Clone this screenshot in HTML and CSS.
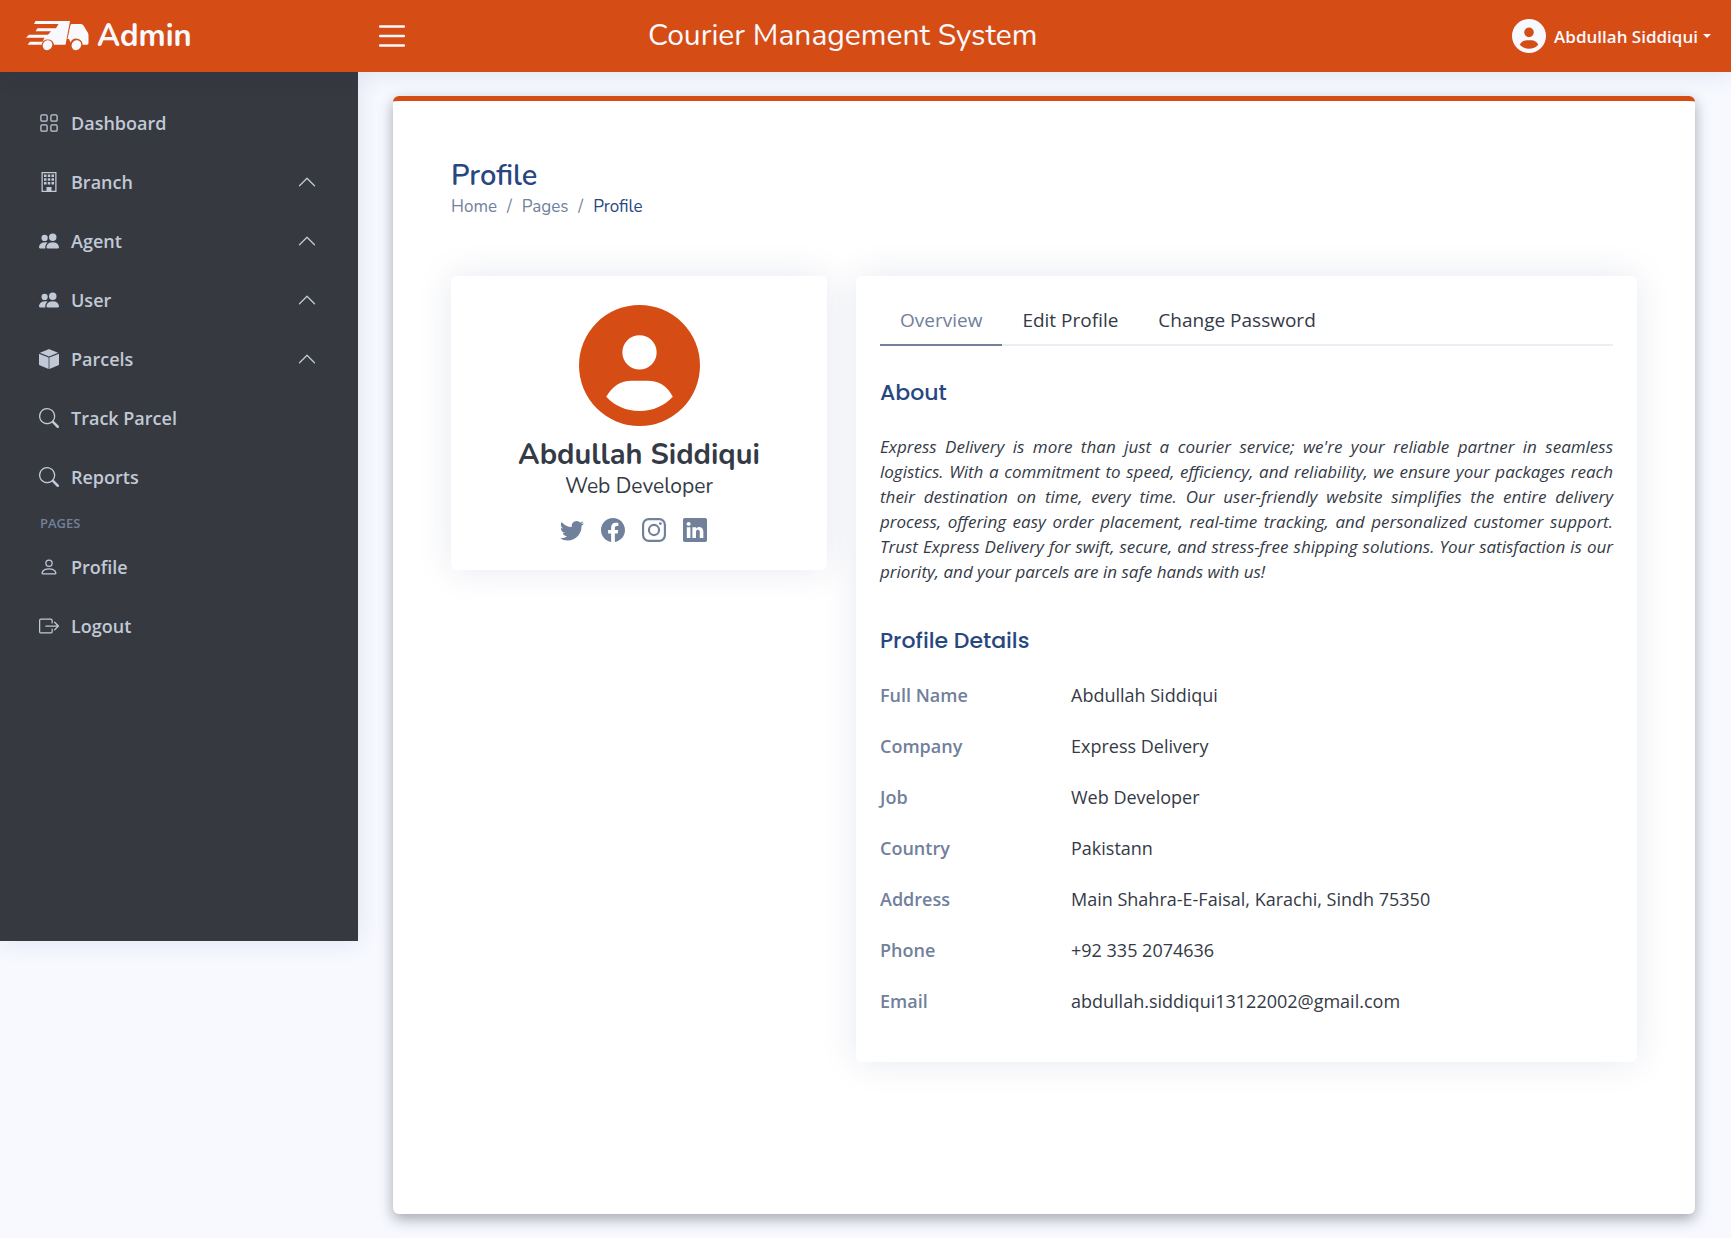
FILE: index.html
```html
<!DOCTYPE html>
<html lang="en">
<head>
<meta charset="utf-8">
<meta name="viewport" content="width=device-width, initial-scale=1">
<title>Profile - Courier Management System</title>
<link rel="stylesheet" href="styles.css">
</head>
<body>
<header class="header">
  <a class="logo" href="#">
    <svg class="logo-icon" viewBox="0 0 64 30" aria-hidden="true" fill="currentColor">
      <path d="M9.500 0H44L39.500 23.700H28A6.300 6.300 0 0 0 15.600 23.700H1.500L4 20.700H16.500L18.500 16.700H0L3 13.700H22L25 10.300H9.500L11.500 7.300H30L32.500 3H8Z"/>
      <path d="M46 3H55Q56.500 3 57.500 4.500L62 12Q62.500 13 62.500 14.500V22Q62.500 23.700 61 23.700H56.600A6.300 6.300 0 0 0 44.500 21.500L43 18H41.500L44.500 4Q44.800 3 46 3Z"/>
      <ellipse cx="21.500" cy="24.200" rx="4.600" ry="5.200" transform="rotate(35 21.500 24.200)"/>
      <ellipse cx="50.400" cy="24.200" rx="4.600" ry="5.200" transform="rotate(35 50.400 24.200)"/>
    </svg>
    <span>Admin</span>
  </a>
  <button class="menu-toggle" type="button" aria-label="Toggle sidebar">
    <svg viewBox="0 0 16 16" fill="currentColor" aria-hidden="true"><path fill-rule="evenodd" d="M2.500 12a.5.5 0 0 1 .5-.5h10a.5.5 0 0 1 0 1H3a.5.5 0 0 1-.5-.5m0-4a.5.5 0 0 1 .5-.5h10a.5.5 0 0 1 0 1H3a.5.5 0 0 1-.5-.5m0-4a.5.5 0 0 1 .5-.5h10a.5.5 0 0 1 0 1H3a.5.5 0 0 1-.5-.5"/></svg>
  </button>
  <div class="system-name">Courier Management System</div>
  <button class="account" type="button">
    <svg class="account-avatar" viewBox="0 0 120 120" aria-hidden="true"><use href="#avatar"/></svg>
    <span>Abdullah Siddiqui</span>
    <span class="caret"></span>
  </button>
</header>

<svg class="sprite" aria-hidden="true">
  <symbol id="avatar" viewBox="0 0 120 120"><path fill="currentColor" fill-rule="evenodd" d="M60 0a60 60 0 1 0 0 120a60 60 0 1 0 0-120M60 30a17 17 0 1 1 0 34a17 17 0 1 1 0-34M27 91Q36 75 52 75H68Q85 75 93 91Q80 105 60 105Q40 105 27 91"/></symbol>
  <symbol id="people" viewBox="0 0 16 16"><path d="M7 14s-1 0-1-1 1-4 5-4 5 3 5 4-1 1-1 1zm4-6a3 3 0 1 0 0-6 3 3 0 0 0 0 6m-5.784 6A2.240 2.240 0 0 1 5 13c0-1.355.68-2.750 1.936-3.720A6.300 6.300 0 0 0 5 9c-4 0-5 3-5 4s1 1 1 1zM4.500 8a2.500 2.500 0 1 0 0-5 2.500 2.500 0 0 0 0 5"/></symbol>
  <symbol id="search" viewBox="0 0 16 16"><path d="M11.742 10.344a6.500 6.500 0 1 0-1.397 1.398h-.001q.044.06.098.115l3.850 3.850a1 1 0 0 0 1.415-1.414l-3.850-3.850a1 1 0 0 0-.115-.1zM12 6.500a5.500 5.500 0 1 1-11 0 5.500 5.500 0 0 1 11 0"/></symbol>
  <symbol id="chevron" viewBox="0 0 16 16"><path d="M7.646 4.646a.5.5 0 0 1 .708 0l6 6a.5.5 0 0 1-.708.708L8 5.707l-5.646 5.647a.5.5 0 0 1-.708-.708z"/></symbol>
</svg>

<div class="layout">
  <nav class="sidebar" aria-label="Main">
    <ul class="nav-list">
      <li><a class="nav-link" href="#"><svg class="icon" viewBox="0 0 16 16"><path d="M1 2.500A1.500 1.500 0 0 1 2.500 1h3A1.500 1.500 0 0 1 7 2.500v3A1.500 1.500 0 0 1 5.500 7h-3A1.500 1.500 0 0 1 1 5.500zM2.500 2a.5.5 0 0 0-.5.5v3a.5.5 0 0 0 .5.5h3a.5.5 0 0 0 .5-.5v-3a.5.5 0 0 0-.5-.5zm6.500.5A1.500 1.500 0 0 1 10.500 1h3A1.500 1.500 0 0 1 15 2.500v3A1.500 1.500 0 0 1 13.500 7h-3A1.500 1.500 0 0 1 9 5.500zm1.500-.5a.5.5 0 0 0-.5.5v3a.5.5 0 0 0 .5.5h3a.5.5 0 0 0 .5-.5v-3a.5.5 0 0 0-.5-.5zM1 10.500A1.500 1.500 0 0 1 2.500 9h3A1.500 1.500 0 0 1 7 10.500v3A1.500 1.500 0 0 1 5.500 15h-3A1.500 1.500 0 0 1 1 13.500zm1.500-.5a.5.5 0 0 0-.5.5v3a.5.5 0 0 0 .5.5h3a.5.5 0 0 0 .5-.5v-3a.5.5 0 0 0-.5-.5zm6.500.5A1.500 1.500 0 0 1 10.500 9h3a1.500 1.500 0 0 1 1.500 1.500v3a1.500 1.500 0 0 1-1.500 1.500h-3A1.500 1.500 0 0 1 9 13.500zm1.500-.5a.5.5 0 0 0-.5.5v3a.5.5 0 0 0 .5.5h3a.5.5 0 0 0 .5-.5v-3a.5.5 0 0 0-.5-.5z"/></svg><span>Dashboard</span></a></li>
      <li><a class="nav-link" href="#"><svg class="icon" viewBox="0 0 16 16"><path fill-rule="evenodd" d="M2 0H14V16H2ZM3 1V15H6V12H10V15H13V1ZM4 2H6V4H4ZM7 2H9V4H7ZM10 2H12V4H10ZM4 5H6V7H4ZM7 5H9V7H7ZM10 5H12V7H10ZM4 8H6V10H4ZM7 8H9V10H7ZM10 8H12V10H10Z"/><path d="M6.500 12.500H9.500V15H6.500Z"/></svg><span>Branch</span><svg class="icon chevron" viewBox="0 0 16 16"><use href="#chevron"/></svg></a></li>
      <li><a class="nav-link" href="#"><svg class="icon" viewBox="0 0 16 16"><use href="#people"/></svg><span>Agent</span><svg class="icon chevron" viewBox="0 0 16 16"><use href="#chevron"/></svg></a></li>
      <li><a class="nav-link" href="#"><svg class="icon" viewBox="0 0 16 16"><use href="#people"/></svg><span>User</span><svg class="icon chevron" viewBox="0 0 16 16"><use href="#chevron"/></svg></a></li>
      <li><a class="nav-link" href="#"><svg class="icon" viewBox="0 0 16 16"><path d="M7.700.15Q8 0 8.300.15L15.300 3L8 5.900L.7 3ZM0 3.700L7.700 6.800V16L.5 13Q0 12.800 0 12.200ZM16 3.700L8.300 6.800V16L15.500 13Q16 12.800 16 12.200Z"/></svg><span>Parcels</span><svg class="icon chevron" viewBox="0 0 16 16"><use href="#chevron"/></svg></a></li>
      <li><a class="nav-link" href="#"><svg class="icon" viewBox="0 0 16 16"><use href="#search"/></svg><span>Track Parcel</span></a></li>
      <li><a class="nav-link" href="#"><svg class="icon" viewBox="0 0 16 16"><use href="#search"/></svg><span>Reports</span></a></li>
      <li class="nav-heading">Pages</li>
      <li><a class="nav-link" href="#"><svg class="icon" viewBox="0 0 16 16"><path d="M8 8a3 3 0 1 0 0-6 3 3 0 0 0 0 6m2-3a2 2 0 1 1-4 0 2 2 0 0 1 4 0m4 8c0 1-1 1-1 1H3s-1 0-1-1 1-4 6-4 6 3 6 4m-1-.004c-.001-.246-.154-.986-.832-1.664C11.516 10.680 10.289 10 8 10s-3.516.68-4.168 1.332c-.678.678-.83 1.418-.832 1.664z"/></svg><span>Profile</span></a></li>
      <li><a class="nav-link" href="#"><svg class="icon" viewBox="0 0 16 16"><path fill-rule="evenodd" d="M10 12.500a.5.5 0 0 1-.5.5h-8a.5.5 0 0 1-.5-.5v-9a.5.5 0 0 1 .5-.5h8a.5.5 0 0 1 .5.5v2a.5.5 0 0 0 1 0v-2A1.500 1.500 0 0 0 9.500 2h-8A1.500 1.500 0 0 0 0 3.500v9A1.500 1.500 0 0 0 1.500 14h8a1.500 1.500 0 0 0 1.500-1.500v-2a.5.5 0 0 0-1 0z"/><path fill-rule="evenodd" d="M15.854 8.354a.5.5 0 0 0 0-.708l-3-3a.5.5 0 0 0-.708.708L14.293 7.500H5.500a.5.5 0 0 0 0 1h8.793l-2.147 2.146a.5.5 0 0 0 .708.708z"/></svg><span>Logout</span></a></li>
    </ul>
  </nav>

  <main class="main">
    <div class="panel">
      <h1 class="page-title">Profile</h1>
      <ol class="breadcrumb">
        <li><a href="#">Home</a></li>
        <li><a href="#">Pages</a></li>
        <li class="current">Profile</li>
      </ol>
      <div class="columns">
        <section class="card person">
          <svg class="person-avatar" viewBox="0 0 120 120" aria-hidden="true"><use href="#avatar"/></svg>
          <h2 class="person-name">Abdullah Siddiqui</h2>
          <h3 class="person-role">Web Developer</h3>
          <div class="social">
            <a href="#" aria-label="Twitter"><svg viewBox="0 0 16 16"><path d="M5.026 15c6.038 0 9.341-5.003 9.341-9.334q.002-.211-.006-.422A6.700 6.700 0 0 0 16 3.542a6.700 6.700 0 0 1-1.889.518 3.300 3.300 0 0 0 1.447-1.817 6.500 6.500 0 0 1-2.087.793A3.286 3.286 0 0 0 7.875 6.030a9.320 9.320 0 0 1-6.767-3.429 3.290 3.290 0 0 0 1.018 4.382A3.300 3.300 0 0 1 .64 6.575v.045a3.290 3.290 0 0 0 2.632 3.218 3.200 3.200 0 0 1-.865.115 3 3 0 0 1-.614-.057 3.280 3.280 0 0 0 3.067 2.277A6.600 6.600 0 0 1 .78 13.580a6 6 0 0 1-.78-.045A9.340 9.340 0 0 0 5.026 15"/></svg></a>
            <a href="#" aria-label="Facebook"><svg viewBox="0 0 16 16"><path d="M16 8.049c0-4.446-3.582-8.050-8-8.050C3.580 0-.002 3.603-.002 8.050c0 4.017 2.926 7.347 6.750 7.951v-5.625h-2.030V8.050H6.750V6.275c0-2.017 1.195-3.131 3.022-3.131.876 0 1.791.157 1.791.157v1.980h-1.009c-.993 0-1.303.621-1.303 1.258v1.510h2.218l-.354 2.326H9.250V16c3.824-.604 6.750-3.934 6.750-7.951"/></svg></a>
            <a href="#" aria-label="Instagram"><svg viewBox="0 0 16 16"><path fill-rule="evenodd" d="M4.500 0H11.500A4.500 4.500 0 0 1 16 4.500V11.500A4.500 4.500 0 0 1 11.500 16H4.500A4.500 4.500 0 0 1 0 11.500V4.500A4.500 4.500 0 0 1 4.500 0M4.600 1.450A3.150 3.150 0 0 0 1.450 4.600V11.400A3.150 3.150 0 0 0 4.600 14.550H11.400A3.150 3.150 0 0 0 14.550 11.400V4.600A3.150 3.150 0 0 0 11.400 1.450ZM8 3.892a4.108 4.108 0 1 1 0 8.216a4.108 4.108 0 1 1 0-8.216M8 5.333a2.667 2.667 0 1 0 0 5.334a2.667 2.667 0 1 0 0-5.334M12.270 2.770a.96.96 0 1 1 0 1.920a.96.96 0 1 1 0-1.920"/></svg></a>
            <a href="#" aria-label="LinkedIn"><svg viewBox="0 0 16 16"><path d="M0 1.146C0 .513.526 0 1.175 0h13.650C15.474 0 16 .513 16 1.146v13.708c0 .633-.526 1.146-1.175 1.146H1.175C.526 16 0 15.487 0 14.854zm4.943 12.248V6.169H2.542v7.225zm-1.200-8.212c.837 0 1.358-.554 1.358-1.248-.015-.709-.52-1.248-1.342-1.248S2.400 3.226 2.400 3.934c0 .694.521 1.248 1.327 1.248zm4.908 8.212V9.359c0-.216.016-.432.080-.586.173-.431.568-.878 1.232-.878.869 0 1.216.662 1.216 1.634v3.865h2.401V9.250c0-2.220-1.184-3.252-2.764-3.252-1.274 0-1.845.7-2.165 1.193v.025h-.016l.016-.025V6.169h-2.400c.030.678 0 7.225 0 7.225z"/></svg></a>
          </div>
        </section>
        <section class="card details">
          <div class="tabs" role="tablist">
            <button class="tab active" type="button" role="tab" aria-selected="true">Overview</button>
            <button class="tab" type="button" role="tab">Edit Profile</button>
            <button class="tab" type="button" role="tab">Change Password</button>
          </div>
          <h2 class="section-title">About</h2>
          <p class="about">Express Delivery is more than just a courier service; we're your reliable partner in seamless logistics. With a commitment to speed, efficiency, and reliability, we ensure your packages reach their destination on time, every time. Our user-friendly website simplifies the entire delivery process, offering easy order placement, real-time tracking, and personalized customer support. Trust Express Delivery for swift, secure, and stress-free shipping solutions. Your satisfaction is our priority, and your parcels are in safe hands with us!</p>
          <h2 class="section-title">Profile Details</h2>
          <dl class="facts">
            <dt>Full Name</dt><dd>Abdullah Siddiqui</dd>
            <dt>Company</dt><dd>Express Delivery</dd>
            <dt>Job</dt><dd>Web Developer</dd>
            <dt>Country</dt><dd>Pakistann</dd>
            <dt>Address</dt><dd>Main Shahra-E-Faisal, Karachi, Sindh 75350</dd>
            <dt>Phone</dt><dd>+92 335 2074636</dd>
            <dt>Email</dt><dd>abdullah.siddiqui13122002@gmail.com</dd>
          </dl>
        </section>
      </div>
    </div>
  </main>
</div>
</body>
</html>
```
FILE: styles.css
```css
:root {
  --orange: #d54d15;
  --dark: #363940;
  --ink: #343a46;
  --navy: #284780;
  --muted: #71809b;
  --display: Nunito, "Open Sans", sans-serif;
}

* { box-sizing: border-box; }

body {
  margin: 0;
  min-height: 100vh;
  display: flex;
  flex-direction: column;
  background: #f7f9ff;
  color: var(--ink);
  font-family: "Open Sans", sans-serif;
  font-size: 17px;
}

a { color: inherit; text-decoration: none; }
button { border: 0; padding: 0; background: none; color: inherit; font: inherit; cursor: pointer; }
h1, h2, h3, p, ul, ol, dl, dd { margin: 0; padding: 0; }
ul, ol { list-style: none; }
svg { display: block; fill: currentColor; flex: none; }
.sprite { position: absolute; width: 0; height: 0; }

.header {
  position: relative;
  z-index: 2;
  display: flex;
  align-items: center;
  height: 72px;
  padding: 0 20px 0 26px;
  background: var(--orange);
  color: #f8f9ff;
  box-shadow: 0 2px 24px rgba(1, 41, 112, .1);
}
.logo {
  display: flex;
  align-items: center;
  gap: 7px;
  width: 347px;
  font: 700 31px/36px var(--display);
}
.logo-icon { width: 64px; height: 30px; }
.menu-toggle svg { width: 38px; height: 38px; }
.system-name {
  margin-left: 237px;
  font: 400 30px/36px var(--display);
}
.account {
  display: flex;
  align-items: center;
  gap: 8px;
  margin-left: auto;
  font-weight: 600;
}
.account-avatar { width: 34px; height: 34px; }
.caret { border: 4px solid transparent; border-top-color: currentColor; border-bottom: 0; margin-left: -3px; }

.layout { flex: 1; display: flex; align-items: stretch; }

.sidebar {
  flex: none;
  align-self: flex-start;
  width: 358px;
  min-height: calc(76vh - 72px);
  padding: 24px;
  background: var(--dark);
  color: #c1c9d6;
  box-shadow: 0 0 24px rgba(1, 41, 112, .1);
}
.nav-list { display: flex; flex-direction: column; gap: 6px; }
.nav-link {
  display: flex;
  align-items: center;
  gap: 12px;
  height: 53px;
  padding: 0 17px 0 15px;
  font-size: 18px;
  font-weight: 600;
}
.icon { width: 20px; height: 20px; }
.chevron { margin-left: auto; }
.nav-heading {
  margin: 4px 0 0 16px;
  color: var(--muted);
  font-size: 13px;
  font-weight: 600;
  line-height: 21px;
  text-transform: uppercase;
}

.main { flex: 1; min-width: 0; display: flex; padding: 24px 36px 24px 35px; }
.panel {
  flex: 1;
  min-width: 0;
  padding: 57px 58px;
  border-top: 5px solid var(--orange);
  border-radius: 6px;
  background: #fff;
  box-shadow: 0 5px 14px rgba(60, 65, 75, .45);
}
.page-title { color: var(--navy); font: 600 29px/36px var(--display); }
.breadcrumb { display: flex; color: var(--muted); font: 400 17px/25px var(--display); }
.breadcrumb li + li::before { content: "/"; padding: 0 10px; color: var(--muted); }
.breadcrumb .current { color: var(--navy); }

.columns {
  display: grid;
  grid-template-columns: 376fr 781fr;
  align-items: start;
  gap: 29px;
  margin-top: 57px;
}
.card { border-radius: 6px; background: #fff; box-shadow: 0 0 36px rgba(1, 41, 112, .1); }

.person { display: flex; flex-direction: column; align-items: center; padding: 29px 24px 28px; }
.person-avatar { width: 121px; height: 121px; color: var(--orange); }
.person-name { margin-top: 12px; font: 700 29px/34px var(--display); }
.person-role { font: 400 21px/28px var(--display); }
.social { display: flex; gap: 17px; margin: 18px 12px 0 0; color: var(--muted); }
.social svg { width: 24px; height: 24px; }

.details { padding: 24px 24px 47px; }
.tabs { display: flex; border-bottom: 2px solid #ebeef4; }
.tab {
  margin-bottom: -2px;
  padding: 6px 20px 10px;
  border-bottom: 2px solid transparent;
  font-size: 19px;
  line-height: 28px;
}
.tab.active { border-bottom-color: var(--muted); color: var(--muted); }
.section-title {
  margin: 34px 0 28px;
  color: var(--navy);
  font: 500 22px/26px Poppins, Inter, sans-serif;
}
.about { margin-bottom: 44px; font-style: italic; font-size: 17px; line-height: 25px; text-align: justify; }
.facts { display: grid; grid-template-columns: 191px 1fr; font-size: 18px; line-height: 27px; row-gap: 24px; }
.facts dt { color: var(--muted); font-weight: 600; }
```
